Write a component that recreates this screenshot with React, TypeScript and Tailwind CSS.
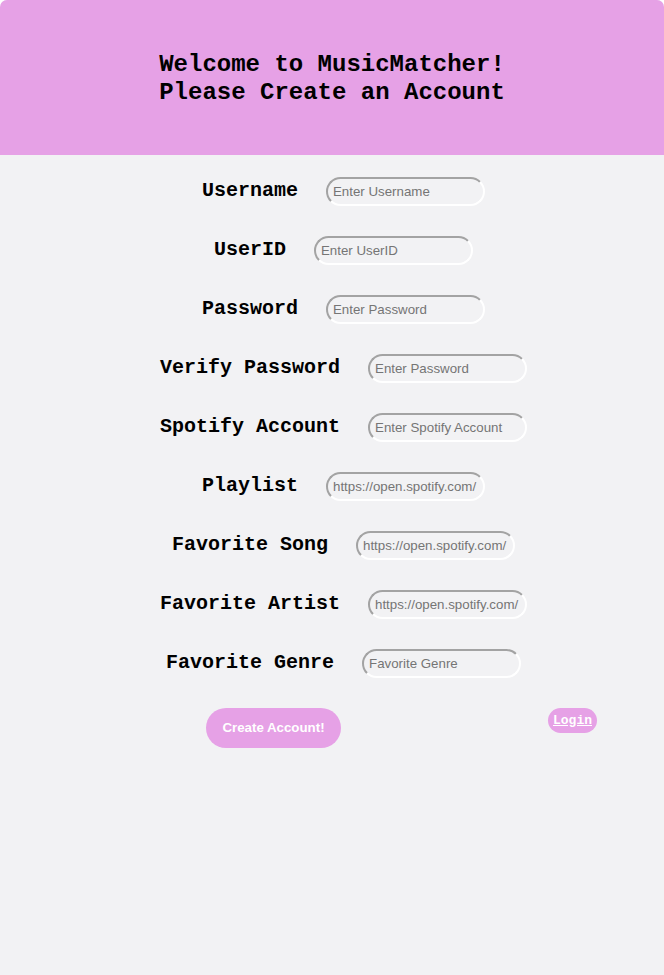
const fields = [
  { label: "Username", placeholder: "Enter Username" },
  { label: "UserID", placeholder: "Enter UserID" },
  { label: "Password", placeholder: "Enter Password" },
  { label: "Verify Password", placeholder: "Enter Password" },
  { label: "Spotify Account", placeholder: "Enter Spotify Account" },
  { label: "Playlist", placeholder: "https://open.spotify.com/" },
  { label: "Favorite Song", placeholder: "https://open.spotify.com/" },
  { label: "Favorite Artist", placeholder: "https://open.spotify.com/" },
  { label: "Favorite Genre", placeholder: "Favorite Genre" },
];

export default function App() {
  return (
    <div className="min-h-[975px] bg-white">
      <div className="min-h-[975px] overflow-hidden rounded-t-[7px] bg-[#f2f2f4]">
        <header className="flex h-[155px] flex-col items-center justify-center bg-[#e6a1e6] pt-[2px]">
          <h1 className="font-['Courier_New','Liberation_Mono',monospace] text-[24px] font-bold leading-[28px] text-black">
            Welcome to MusicMatcher!
            <br />
            Please Create an Account
          </h1>
        </header>

        <div className="flex flex-col items-center pl-[23px] pt-[22px]">
          {fields.map((f, i) => (
            <div key={i} className="flex h-[59px] items-start gap-[28px]">
              <label className="mt-[2px] font-['Courier_New','Liberation_Mono',monospace] text-[20px] font-bold leading-[24px] text-black">
                {f.label}
              </label>
              <input
                placeholder={f.placeholder}
                className="h-[29px] w-[159px] rounded-[15px] border-2 border-b-white border-l-[#a3a3a3] border-r-white border-t-[#a3a3a3] bg-transparent px-[5px] font-['Liberation_Sans',Arial,sans-serif] text-[13.3px] text-black outline-none placeholder:text-[#757575]"
              />
            </div>
          ))}
        </div>

        <div className="flex items-start">
          <button className="ml-[206px] h-[40px] w-[135px] rounded-[20px] bg-[#e6a1e6] font-['Liberation_Sans',Arial,sans-serif] text-[13.3px] font-bold text-white">
            Create Account!
          </button>
          <button className="ml-[207px] h-[25px] w-[49px] rounded-[13px] bg-[#e6a1e6] font-['Courier_New','Liberation_Mono',monospace] text-[13px] font-bold text-white underline">
            Login
          </button>
        </div>
      </div>
    </div>
  );
}
